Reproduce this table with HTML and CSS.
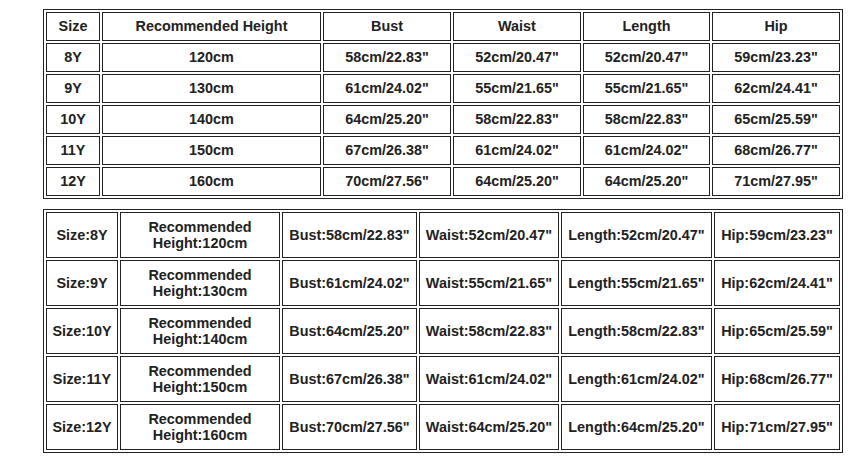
FILE: index.html
```html
<!DOCTYPE html>
<html>
<head>
<meta charset="utf-8">
<link rel="stylesheet" href="styles.css">
</head>
<body>
<table class="size-table t1">
  <colgroup>
    <col class="c1"><col class="c2"><col class="c3"><col class="c4"><col class="c5"><col class="c6">
  </colgroup>
  <tr><td>Size</td><td>Recommended Height</td><td>Bust</td><td>Waist</td><td>Length</td><td>Hip</td></tr>
  <tr><td>8Y</td><td>120cm</td><td>58cm/22.83"</td><td>52cm/20.47"</td><td>52cm/20.47"</td><td>59cm/23.23"</td></tr>
  <tr><td>9Y</td><td>130cm</td><td>61cm/24.02"</td><td>55cm/21.65"</td><td>55cm/21.65"</td><td>62cm/24.41"</td></tr>
  <tr><td>10Y</td><td>140cm</td><td>64cm/25.20"</td><td>58cm/22.83"</td><td>58cm/22.83"</td><td>65cm/25.59"</td></tr>
  <tr><td>11Y</td><td>150cm</td><td>67cm/26.38"</td><td>61cm/24.02"</td><td>61cm/24.02"</td><td>68cm/26.77"</td></tr>
  <tr><td>12Y</td><td>160cm</td><td>70cm/27.56"</td><td>64cm/25.20"</td><td>64cm/25.20"</td><td>71cm/27.95"</td></tr>
</table>
<table class="size-table t2">
  <colgroup>
    <col class="d1"><col class="d2"><col class="d3"><col class="d4"><col class="d5"><col class="d6">
  </colgroup>
  <tr><td>Size:8Y</td><td>Recommended<br>Height:120cm</td><td>Bust:58cm/22.83"</td><td>Waist:52cm/20.47"</td><td>Length:52cm/20.47"</td><td>Hip:59cm/23.23"</td></tr>
  <tr><td>Size:9Y</td><td>Recommended<br>Height:130cm</td><td>Bust:61cm/24.02"</td><td>Waist:55cm/21.65"</td><td>Length:55cm/21.65"</td><td>Hip:62cm/24.41"</td></tr>
  <tr><td>Size:10Y</td><td>Recommended<br>Height:140cm</td><td>Bust:64cm/25.20"</td><td>Waist:58cm/22.83"</td><td>Length:58cm/22.83"</td><td>Hip:65cm/25.59"</td></tr>
  <tr><td>Size:11Y</td><td>Recommended<br>Height:150cm</td><td>Bust:67cm/26.38"</td><td>Waist:61cm/24.02"</td><td>Length:61cm/24.02"</td><td>Hip:68cm/26.77"</td></tr>
  <tr><td>Size:12Y</td><td>Recommended<br>Height:160cm</td><td>Bust:70cm/27.56"</td><td>Waist:64cm/25.20"</td><td>Length:64cm/25.20"</td><td>Hip:71cm/27.95"</td></tr>
</table>
</body>
</html>
```
FILE: styles.css
```css
* { box-sizing: border-box; }
html, body { margin: 0; padding: 0; background: #fff; }
body {
  font-family: "Liberation Sans", Arial, sans-serif;
  font-weight: bold;
  font-size: 14.4px;
  color: #222;
  padding: 9px 0 0 43px;
}
.size-table {
  border-collapse: separate;
  border-spacing: 2px;
  border: 1px solid #222;
  table-layout: fixed;
  width: 800px;
}
.size-table td {
  border: 1px solid #222;
  padding: 0 0 1px;
  text-align: center;
  vertical-align: middle;
  white-space: nowrap;
  line-height: 16px;
}
.t1 td { height: 29px; }
.t2 { margin-top: 10px; }
.t2 td { height: 46px; }
.c1 { width: 54px; }
.c2 { width: 219px; }
.c3 { width: 128px; }
.c4 { width: 128px; }
.c5 { width: 127px; }
.c6 { width: 128px; }
.d1 { width: 72px; }
.d2 { width: 160px; }
.d3 { width: 135px; }
.d4 { width: 140px; }
.d5 { width: 151px; }
.d6 { width: 126px; }
```
